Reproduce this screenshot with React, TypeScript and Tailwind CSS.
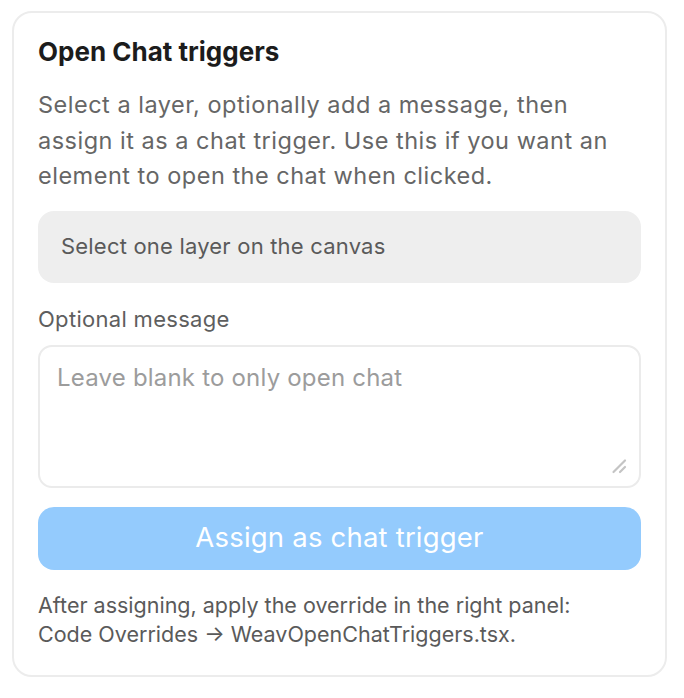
import React from "react";

export default function App() {
  return (
    <div
      className="min-h-screen bg-white pt-[11px] pl-[12px]"
      style={{ fontFamily: "Inter, 'Noto Sans', sans-serif" }}
    >
      <div className="w-[655px] h-[666px] rounded-[20px] border-2 border-[#ececec] bg-white px-[24px] pt-[24px] flex flex-col">
        <h1 className="text-[26px] leading-[30px] font-bold text-[#1c1c1c]">
          Open Chat triggers
        </h1>
        <p className="mt-[20px] text-[23.5px] leading-[35.5px] text-[#666666] tracking-[0.5px]">
          Select a layer, optionally add a message, then
          <br />
          assign it as a chat trigger. Use this if you want an
          <br />
          element to open the chat when clicked.
        </p>
        <div className="mt-[17px] h-[72px] rounded-[16px] bg-[#eeeeee] flex items-center px-[23px] text-[22px] tracking-[0.2px] text-[#5a5a5a]">
          Select one layer on the canvas
        </div>
        <label className="mt-[22px] text-[22px] leading-[28px] tracking-[0.3px] text-[#5e5e5e]">
          Optional message
        </label>
        <div className="relative mt-[12px] h-[143px] rounded-[14px] border-2 border-[#ebebeb] px-[17px] pt-[16px]">
          <span className="text-[24px] leading-[30px] tracking-[0.2px] text-[#9c9c9c]">
            Leave blank to only open chat
          </span>
          <svg
            className="absolute right-[12px] bottom-[12px]"
            width="16"
            height="16"
            viewBox="0 0 16 16"
          >
            <path
              d="M2.5 14 L14 2.5 M9 14 L14 9"
              stroke="#c4c4c4"
              strokeWidth="2.2"
              strokeLinecap="round"
            />
          </svg>
        </div>
        <button className="mt-[19px] h-[63px] rounded-[16px] bg-[#94cbfd] text-white text-[27.5px] tracking-[0.2px]">
          Assign as chat trigger
        </button>
        <p className="mt-[21px] text-[21.5px] leading-[29.5px] text-[#5a5a5a]">
          After assigning, apply the override in the right panel:
          <br />
          Code Overrides → WeavOpenChatTriggers.tsx.
        </p>
      </div>
    </div>
  );
}
